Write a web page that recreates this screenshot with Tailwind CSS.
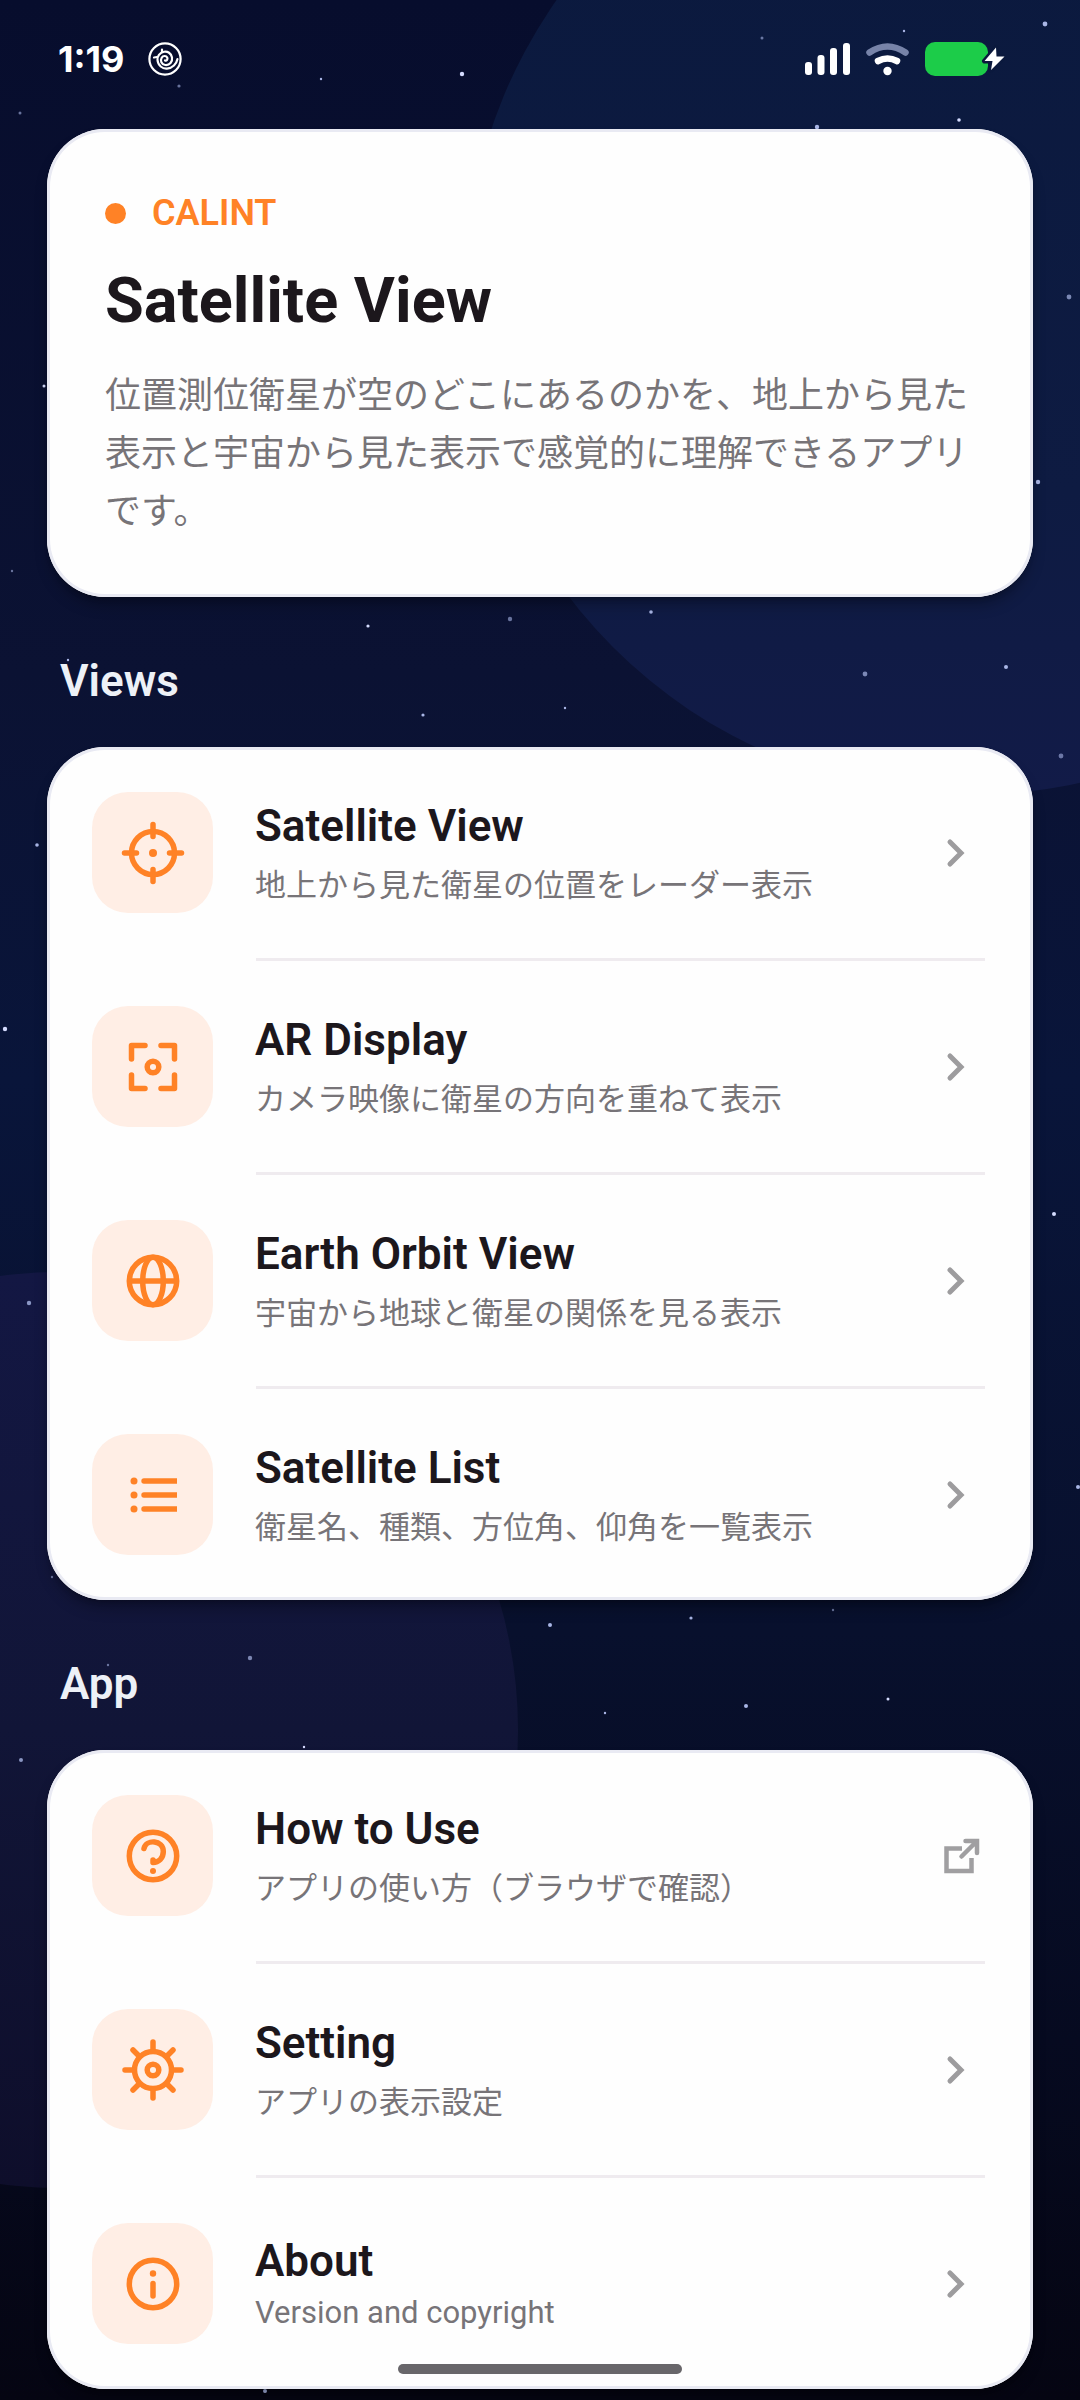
<!DOCTYPE html>
<html lang="ja">
  <head>
    <meta charset="UTF-8" />
    <meta name="viewport" content="width=device-width, initial-scale=1.0" />
    <title>Satellite View</title>
    <script src="https://cdn.jsdelivr.net/npm/@tailwindcss/browser@4"></script>
  </head>
  <body
    class="relative min-h-screen overflow-x-hidden bg-[#070d2b] font-['Roboto','Noto_Sans_CJK_JP',sans-serif] text-[#1c171c]"
  >
    <!-- night sky -->
    <svg
      class="absolute inset-0 -z-10 h-full w-full"
      viewBox="0 0 1080 2400"
      preserveAspectRatio="xMidYMin slice"
      aria-hidden="true"
    >
      <defs>
        <linearGradient id="sky" x1="0" y1="0" x2="0" y2="1">
          <stop offset="0" stop-color="#070d2d" />
          <stop offset="0.28" stop-color="#0b1233" />
          <stop offset="0.45" stop-color="#09153a" />
          <stop offset="0.68" stop-color="#08102d" />
          <stop offset="0.85" stop-color="#060a20" />
          <stop offset="1" stop-color="#050512" />
        </linearGradient>
        <linearGradient id="planet" x1="0" y1="0" x2="0" y2="1">
          <stop offset="0" stop-color="#0a193d" />
          <stop offset="0.7" stop-color="#0e1b42" />
          <stop offset="1" stop-color="#121b48" />
        </linearGradient>
        <linearGradient id="haze" x1="0" y1="0" x2="0" y2="1">
          <stop offset="0" stop-color="#131743" />
          <stop offset="0.5" stop-color="#111537" />
          <stop offset="1" stop-color="#0e0e2b" />
        </linearGradient>
      </defs>
      <rect width="1080" height="2400" fill="url(#sky)" />
      <circle cx="970" cy="290" r="505" fill="url(#planet)" />
      <circle cx="60" cy="1730" r="458" fill="url(#haze)" />
      <g fill="#a9b6e6">
        <circle cx="462" cy="74" r="2.2" fill="#d5dcff" />
        <circle cx="321" cy="79" r="1.2" />
        <circle cx="179" cy="86" r="1.6" opacity="0.6" />
        <circle cx="20" cy="113" r="1.5" opacity="0.6" />
        <circle cx="762" cy="38" r="1.5" opacity="0.6" />
        <circle cx="904" cy="31" r="1.2" />
        <circle cx="1045" cy="24" r="2.4" />
        <circle cx="817" cy="127" r="2.2" />
        <circle cx="959" cy="120" r="1.8" fill="#d5dcff" />
        <circle cx="1069" cy="297" r="2.4" opacity="0.7" />
        <circle cx="1038" cy="482" r="2.2" />
        <circle cx="44" cy="386" r="1.5" fill="#d5dcff" />
        <circle cx="12" cy="571" r="1.2" opacity="0.6" />
        <circle cx="368" cy="626" r="1.6" fill="#d5dcff" />
        <circle cx="510" cy="619" r="2.2" opacity="0.6" />
        <circle cx="651" cy="612" r="1.8" />
        <circle cx="68" cy="660" r="1.2" />
        <circle cx="423" cy="715" r="1.6" />
        <circle cx="565" cy="708" r="1.2" />
        <circle cx="865" cy="674" r="2.4" opacity="0.7" />
        <circle cx="1006" cy="667" r="2" />
        <circle cx="1061" cy="756" r="2.4" opacity="0.6" />
        <circle cx="37" cy="845" r="1.8" />
        <circle cx="5" cy="1029" r="2.2" fill="#d5dcff" />
        <circle cx="1054" cy="1214" r="2" fill="#d5dcff" />
        <circle cx="29" cy="1303" r="2.2" opacity="0.8" />
        <circle cx="1078" cy="1487" r="2" />
        <circle cx="52" cy="1577" r="1.2" opacity="0.6" />
        <circle cx="550" cy="1625" r="2" />
        <circle cx="691" cy="1618" r="1.6" />
        <circle cx="833" cy="1610" r="1.2" opacity="0.6" />
        <circle cx="108" cy="1665" r="1.2" opacity="0.6" />
        <circle cx="250" cy="1658" r="2.2" opacity="0.7" />
        <circle cx="605" cy="1713" r="1.2" />
        <circle cx="746" cy="1706" r="2" />
        <circle cx="888" cy="1699" r="1.5" fill="#d5dcff" />
        <circle cx="304" cy="1747" r="1.2" fill="#d5dcff" />
        <circle cx="21" cy="1760" r="2" opacity="0.8" />
        <circle cx="265" cy="2391" r="2" />
      </g>
    </svg>

    <!-- status bar -->
    <header
      class="flex h-[129px] items-center justify-between pr-[75px] pb-[11px] pl-[58px] text-white"
    >
      <div class="flex items-center gap-6">
        <span class="font-['Inter'] text-[36px] leading-10 font-bold">1:19</span>
        <svg
          class="size-[34px]"
          viewBox="0 0 34 34"
          fill="none"
          stroke="currentColor"
          stroke-width="2.2"
          stroke-linecap="round"
          aria-hidden="true"
        >
          <circle cx="17" cy="17" r="15.6" />
          <path
            d="M17 18.5c1.8.6 3-1.2 2.200-3-1-2-4.200-2-5.500.2-1.800 3-.2 6.800 3.500 7.300 4.500.5 7.500-3.200 6.800-7.500-.7-4.300-4.500-6.500-8-5.700-4.500 1-6.800 4.700-6.500 8.200.4 5.500 5 9 9.500 8.600 5.500-.4 9.500-4.600 10.500-9.600"
          />
          <path d="M14 10V7.500M9 15 6 15.500" />
        </svg>
      </div>
      <div class="flex items-center gap-4">
        <svg class="h-[34px] w-[45px]" viewBox="0 0 45 34" fill="currentColor" aria-hidden="true">
          <rect x="0" y="20" width="7" height="13" rx="3" />
          <rect x="12.500" y="13" width="7" height="20" rx="3" />
          <rect x="25" y="6" width="7" height="27" rx="3" />
          <rect x="38" y="1" width="7" height="32" rx="3" />
        </svg>
        <svg
          class="h-[34px] w-[43px]"
          viewBox="0 0 43 34"
          fill="none"
          stroke="currentColor"
          stroke-linecap="round"
          aria-hidden="true"
        >
          <path d="M3.500 10.500Q21.500-1.500 39.500 10.500" stroke="#7783a8" stroke-width="6.500" />
          <path d="M12 19Q21.500 14 31 19" stroke-width="6.500" />
          <circle cx="21.500" cy="29" r="4.200" fill="currentColor" stroke="none" />
        </svg>
        <svg class="h-[34px] w-[80px]" viewBox="0 0 80 34" aria-hidden="true">
          <rect width="63" height="34" rx="10" fill="#1ccc49" />
          <path
            d="M71 5.500 59.500 19h8L66 28 79.500 14.500H71.500z"
            fill="#fff"
            stroke="#0b193d"
            stroke-width="5"
            stroke-linejoin="round"
            paint-order="stroke"
          />
        </svg>
      </div>
    </header>

    <main class="px-[47px] pb-[11px]">
      <section
        class="rounded-[58px] bg-[#fefefe] px-[58px] pt-[58px] pb-14 shadow-lg ring-3 shadow-black/30 ring-[#e9eaf3] ring-inset"
      >
        <div class="flex h-[52px] items-center gap-[26px] text-[#ff8226]">
          <span class="size-[21px] rounded-full bg-[#ff8226]"></span>
          <p class="text-[36px] leading-[52px] font-semibold">CALINT</p>
        </div>
        <h1 class="mt-[22px] text-[63px] leading-20 font-bold">Satellite View</h1>
        <p class="mt-[26px] text-[36px] leading-[58px] text-[#777478]">
          位置測位衛星が空のどこにあるのかを、地上から見た表示と宇宙から見た表示で感覚的に理解できるアプリです。
        </p>
      </section>

      <h2 class="mt-[55px] mb-[37px] px-[13px] text-[44px] leading-[58px] font-semibold text-[#edf1f7]">
        Views
      </h2>
      <nav
        aria-label="Views"
        class="rounded-[58px] bg-[#fefefe] shadow-lg ring-3 shadow-black/30 ring-[#e9eaf3] ring-inset"
      >
        <a href="#satellite-view" class="flex items-center gap-[42px] py-[45px] pr-12 pl-[45px]">
          <span
            class="flex size-[121px] shrink-0 items-center justify-center rounded-[36px] bg-[#ffeee5]"
          >
            <svg
              class="size-16"
              viewBox="0 0 64 64"
              fill="none"
              stroke="#ff8226"
              stroke-width="5.500"
              stroke-linecap="round"
              aria-hidden="true"
            >
              <circle cx="32" cy="32" r="21.500" />
              <path d="M32 3.500v12M32 48.500v12M3.500 32h12M48.500 32h12" />
              <circle cx="32" cy="32" r="4" fill="#ff8226" stroke="none" />
            </svg>
          </span>
          <span class="flex flex-1 flex-col gap-[11px] pt-[3px]">
            <span class="text-[44px] leading-[52px] font-semibold">Satellite View</span>
            <span class="text-[31px] leading-[45px] text-[#777478]">
              地上から見た衛星の位置をレーダー表示
            </span>
          </span>
          <svg
            class="size-12"
            viewBox="0 0 48 48"
            fill="none"
            stroke="#9d9c9e"
            stroke-width="5"
            stroke-linecap="round"
            aria-hidden="true"
          >
            <path d="m13 13 11 11-11 11" />
          </svg>
        </a>
        <hr class="mr-12 ml-[209px] border-t-3 border-[#efebef]" />
        <a href="#ar-display" class="flex items-center gap-[42px] py-[45px] pr-12 pl-[45px]">
          <span
            class="flex size-[121px] shrink-0 items-center justify-center rounded-[36px] bg-[#ffeee5]"
          >
            <svg
              class="size-16"
              viewBox="0 0 64 64"
              fill="none"
              stroke="#ff8226"
              stroke-width="5.500"
              stroke-linecap="round"
              stroke-linejoin="round"
              aria-hidden="true"
            >
              <path
                d="M10.500 24V10.500H24M40 10.500h13.500V24M53.500 40v13.500H40M24 53.500H10.500V40"
              />
              <circle cx="32" cy="32" r="5.800" />
            </svg>
          </span>
          <span class="flex flex-1 flex-col gap-[11px] pt-[3px]">
            <span class="text-[44px] leading-[52px] font-semibold">AR Display</span>
            <span class="text-[31px] leading-[45px] text-[#777478]">
              カメラ映像に衛星の方向を重ねて表示
            </span>
          </span>
          <svg
            class="size-12"
            viewBox="0 0 48 48"
            fill="none"
            stroke="#9d9c9e"
            stroke-width="5"
            stroke-linecap="round"
            aria-hidden="true"
          >
            <path d="m13 13 11 11-11 11" />
          </svg>
        </a>
        <hr class="mr-12 ml-[209px] border-t-3 border-[#efebef]" />
        <a href="#earth-orbit" class="flex items-center gap-[42px] py-[45px] pr-12 pl-[45px]">
          <span
            class="flex size-[121px] shrink-0 items-center justify-center rounded-[36px] bg-[#ffeee5]"
          >
            <svg
              class="size-16"
              viewBox="0 0 64 64"
              fill="none"
              stroke="#ff8226"
              stroke-width="5.500"
              aria-hidden="true"
            >
              <circle cx="32" cy="32" r="23.700" />
              <ellipse cx="32" cy="32" rx="10.300" ry="23.700" />
              <path d="M8 32h48" />
            </svg>
          </span>
          <span class="flex flex-1 flex-col gap-[11px] pt-[3px]">
            <span class="text-[44px] leading-[52px] font-semibold">Earth Orbit View</span>
            <span class="text-[31px] leading-[45px] text-[#777478]">
              宇宙から地球と衛星の関係を見る表示
            </span>
          </span>
          <svg
            class="size-12"
            viewBox="0 0 48 48"
            fill="none"
            stroke="#9d9c9e"
            stroke-width="5"
            stroke-linecap="round"
            aria-hidden="true"
          >
            <path d="m13 13 11 11-11 11" />
          </svg>
        </a>
        <hr class="mr-12 ml-[209px] border-t-3 border-[#efebef]" />
        <a href="#satellite-list" class="flex items-center gap-[42px] py-[45px] pr-12 pl-[45px]">
          <span
            class="flex size-[121px] shrink-0 items-center justify-center rounded-[36px] bg-[#ffeee5]"
          >
            <svg class="size-16" viewBox="0 0 64 64" fill="#ff8226" aria-hidden="true">
              <circle cx="13" cy="18" r="3.500" />
              <circle cx="13" cy="32" r="3.500" />
              <circle cx="13" cy="46" r="3.500" />
              <path
                d="M56 15.300v5.400H23a2.700 2.700 0 0 1 0-5.400zM56 29.300v5.400H23a2.700 2.700 0 0 1 0-5.400zM56 43.300v5.400H23a2.700 2.700 0 0 1 0-5.400z"
              />
            </svg>
          </span>
          <span class="flex flex-1 flex-col gap-[11px] pt-[3px]">
            <span class="text-[44px] leading-[52px] font-semibold">Satellite List</span>
            <span class="text-[31px] leading-[45px] text-[#777478]">
              衛星名、種類、方位角、仰角を一覧表示
            </span>
          </span>
          <svg
            class="size-12"
            viewBox="0 0 48 48"
            fill="none"
            stroke="#9d9c9e"
            stroke-width="5"
            stroke-linecap="round"
            aria-hidden="true"
          >
            <path d="m13 13 11 11-11 11" />
          </svg>
        </a>
      </nav>

      <h2 class="mt-[55px] mb-[37px] px-[13px] text-[44px] leading-[58px] font-semibold text-[#edf1f7]">
        App
      </h2>
      <nav
        aria-label="App"
        class="rounded-[58px] bg-[#fefefe] shadow-lg ring-3 shadow-black/30 ring-[#e9eaf3] ring-inset"
      >
        <a href="#how-to-use" class="flex items-center gap-[42px] py-[45px] pr-12 pl-[45px]">
          <span
            class="flex size-[121px] shrink-0 items-center justify-center rounded-[36px] bg-[#ffeee5]"
          >
            <svg
              class="size-16"
              viewBox="0 0 64 64"
              fill="none"
              stroke="#ff8226"
              stroke-width="5.500"
              stroke-linecap="round"
              stroke-linejoin="round"
              aria-hidden="true"
            >
              <circle cx="32" cy="32" r="23.700" />
              <path d="M23 24.500C25 15 42.300 15.500 42.300 27.500c0 7-4.800 11-10.300 11v-2.500" />
              <circle cx="32" cy="47" r="3" fill="#ff8226" stroke="none" />
            </svg>
          </span>
          <span class="flex flex-1 flex-col gap-[11px] pt-[3px]">
            <span class="text-[44px] leading-[52px] font-semibold">How to Use</span>
            <span class="text-[31px] leading-[45px] text-[#777478]">
              アプリの使い方（ブラウザで確認）
            </span>
          </span>
          <svg
            class="size-12"
            viewBox="0 0 48 48"
            fill="none"
            stroke="#a09fa1"
            stroke-width="4.500"
            aria-hidden="true"
          >
            <path d="M25 16.500H9.500V39h25V26" />
            <path d="M28.500 9H40v12M24.500 24.500 39 10" stroke-linecap="round" />
          </svg>
        </a>
        <hr class="mr-12 ml-[209px] border-t-3 border-[#efebef]" />
        <a href="#setting" class="flex items-center gap-[42px] py-[45px] pr-12 pl-[45px]">
          <span
            class="flex size-[121px] shrink-0 items-center justify-center rounded-[36px] bg-[#ffeee5]"
          >
            <svg
              class="size-16"
              viewBox="0 0 64 64"
              fill="none"
              stroke="#ff8226"
              stroke-width="5.500"
              stroke-linecap="round"
              aria-hidden="true"
            >
              <circle cx="32" cy="32" r="18.500" />
              <circle cx="32" cy="32" r="5.800" />
              <path
                d="M32 4v8M32 52v8M4 32h8M52 32h8M12 12l5.500 5.500M52 12l-5.500 5.500M12 52l5.500-5.500M52 52l-5.500-5.500"
              />
            </svg>
          </span>
          <span class="flex flex-1 flex-col gap-[11px] pt-[3px]">
            <span class="text-[44px] leading-[52px] font-semibold">Setting</span>
            <span class="text-[31px] leading-[45px] text-[#777478]">アプリの表示設定</span>
          </span>
          <svg
            class="size-12"
            viewBox="0 0 48 48"
            fill="none"
            stroke="#9d9c9e"
            stroke-width="5"
            stroke-linecap="round"
            aria-hidden="true"
          >
            <path d="m13 13 11 11-11 11" />
          </svg>
        </a>
        <hr class="mr-12 ml-[209px] border-t-3 border-[#efebef]" />
        <a href="#about" class="flex items-center gap-[42px] py-[45px] pr-12 pl-[45px]">
          <span
            class="flex size-[121px] shrink-0 items-center justify-center rounded-[36px] bg-[#ffeee5]"
          >
            <svg
              class="size-16"
              viewBox="0 0 64 64"
              fill="none"
              stroke="#ff8226"
              stroke-width="5.500"
              stroke-linecap="round"
              aria-hidden="true"
            >
              <circle cx="32" cy="32" r="23.700" />
              <path d="M32 31.500V44" />
              <circle cx="32" cy="21.500" r="3.200" fill="#ff8226" stroke="none" />
            </svg>
          </span>
          <span class="flex flex-1 flex-col gap-[3px] pt-[3px]">
            <span class="text-[44px] leading-[52px] font-semibold">About</span>
            <span class="text-[31px] leading-[45px] text-[#777478]">Version and copyright</span>
          </span>
          <svg
            class="size-12"
            viewBox="0 0 48 48"
            fill="none"
            stroke="#9d9c9e"
            stroke-width="5"
            stroke-linecap="round"
            aria-hidden="true"
          >
            <path d="m13 13 11 11-11 11" />
          </svg>
        </a>
      </nav>
    </main>

    <!-- home indicator -->
    <div
      class="fixed bottom-[26px] left-1/2 h-[10px] w-[284px] -translate-x-1/2 rounded-full bg-[#68666a]"
    ></div>
  </body>
</html>
